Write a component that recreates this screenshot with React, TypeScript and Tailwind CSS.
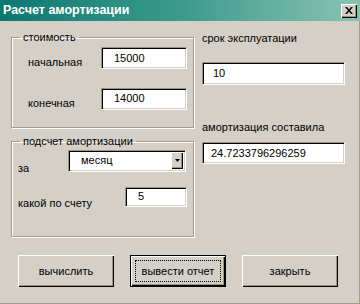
const font = "font-['Liberation_Sans',Arial,sans-serif]";

const Field = ({ value, className }: { value: string; className: string }) => (
  <div
    className={`flex items-center bg-white border border-t-[#9c937f] border-l-[#9c937f] border-r-white border-b-white shadow-[inset_1px_1px_0_#000,inset_-1px_-1px_0_#d4d0c8] text-[11px] ${className}`}
  >
    {value}
  </div>
);

const Button = ({ label, active }: { label: string; active?: boolean }) => (
  <button
    className={`w-[96px] h-[32px] bg-[#d4d0c8] text-[11px] text-black ${
      active
        ? 'border border-black shadow-[inset_1px_1px_0_#fff,inset_-1px_-1px_0_#000,inset_-2px_-2px_0_#9c937f]'
        : 'shadow-[inset_1px_1px_0_#fff,inset_-1px_-1px_0_#000,inset_-2px_-2px_0_#9c937f]'
    } flex items-center justify-center`}
  >
    {active ? (
      <span className="w-[86px] h-[22px] border border-dotted border-black flex items-center justify-center">{label}</span>
    ) : (
      label
    )}
  </button>
);

export default function App() {
  return (
    <div className={`w-[360px] h-[304px] bg-[#d4d0c8] flex flex-col text-black ${font}`}>
      {/* title bar */}
      <div className="h-[21px] flex items-center justify-between pl-[3px] pr-[3px] bg-gradient-to-r from-[#08786f] via-[#3a9a8d] to-[#88c3b2]">
        <span className="text-white font-bold text-[12.5px] leading-none">Расчет амортизации</span>
        <div className="w-[16px] h-[14px] bg-[#d4d0c8] shadow-[inset_1px_1px_0_#fff,inset_-1px_-1px_0_#000,inset_-2px_-2px_0_#9c937f] flex items-center justify-center">
          <svg width="8" height="7" viewBox="0 0 8 7">
            <path d="M0 0h2l2 2.5L6 0h2L5 3.5 8 7H6L4 4.5 2 7H0l3-3.5z" fill="#000" />
          </svg>
        </div>
      </div>

      <div className="flex-1 flex flex-col border-r border-b border-[#a69d89]">
        <div className="flex">
          {/* left column */}
          <div className="ml-[11px] w-[183px] flex flex-col gap-[6px] mt-[9px]">
            <fieldset className="h-[98px] border border-[#a69d89] shadow-[1px_1px_0_#fff,inset_1px_1px_0_#fff]">
              <legend className="ml-[8px] px-[3px] text-[11px] leading-[14px]">стоимость</legend>
              <div className="flex flex-col gap-[17px] mt-[3px]">
                <div className="flex items-start justify-between pl-[16px] pr-[6px]">
                  <span className="text-[11px] mt-[7px]">начальная</span>
                  <Field value="15000" className="w-[86px] h-[22px] pl-[12px]" />
                </div>
                <div className="flex items-start justify-between pl-[16px] pr-[6px]">
                  <span className="text-[11px] mt-[7px]">конечная</span>
                  <Field value="14000" className="w-[86px] h-[22px] pl-[12px]" />
                </div>
              </div>
            </fieldset>

            <fieldset className="h-[103px] border border-[#a69d89] shadow-[1px_1px_0_#fff,inset_1px_1px_0_#fff]">
              <legend className="ml-[8px] px-[3px] text-[11px] leading-[14px]">подсчет амортизации</legend>
              <div className="flex flex-col gap-[10px] mt-[2px]">
                <div className="flex items-start pl-[6px] pr-[7px]">
                  <span className="text-[11px] mt-[10px] w-[50px]">за</span>
                  <div className="flex-1 h-[22px] flex bg-white border border-t-[#9c937f] border-l-[#9c937f] border-r-white border-b-white shadow-[inset_1px_1px_0_#000,inset_-1px_-1px_0_#d4d0c8] p-[1px] pr-[2px] pb-[2px]">
                    <span className="flex-1 pl-[11px] text-[11px] leading-[17px]">месяц</span>
                    <div className="w-[12px] h-full bg-[#d4d0c8] shadow-[inset_1px_1px_0_#fff,inset_-1px_-1px_0_#000,inset_-2px_-2px_0_#9c937f] flex items-center justify-center">
                      <svg width="5" height="3" viewBox="0 0 5 3">
                        <path d="M0 0h5L2.5 3z" fill="#000" />
                      </svg>
                    </div>
                  </div>
                </div>
                <div className="flex items-start justify-between pl-[6px] pr-[6px]">
                  <span className="text-[11px] mt-[8px]">какой по счету</span>
                  <Field value="5" className="w-[62px] h-[20px] pl-[12px]" />
                </div>
              </div>
            </fieldset>
          </div>

          {/* right column */}
          <div className="ml-[8px] w-[143px] flex flex-col">
            <span className="text-[11px] mt-[10px] leading-[14px]">срок эксплуатации</span>
            <Field value="10" className="w-[143px] h-[23px] pl-[10px] mt-[17px]" />
            <span className="text-[11px] mt-[35px] leading-[14px]">амортизация составила</span>
            <Field value="24.7233796296259" className="w-[143px] h-[22px] pl-[8px] mt-[8px]" />
          </div>
        </div>

        {/* buttons */}
        <div className="flex gap-[16px] pl-[18px] mt-[18px]">
          <Button label="вычислить" />
          <Button label="вывести отчет" active />
          <Button label="закрыть" />
        </div>
      </div>
    </div>
  );
}
